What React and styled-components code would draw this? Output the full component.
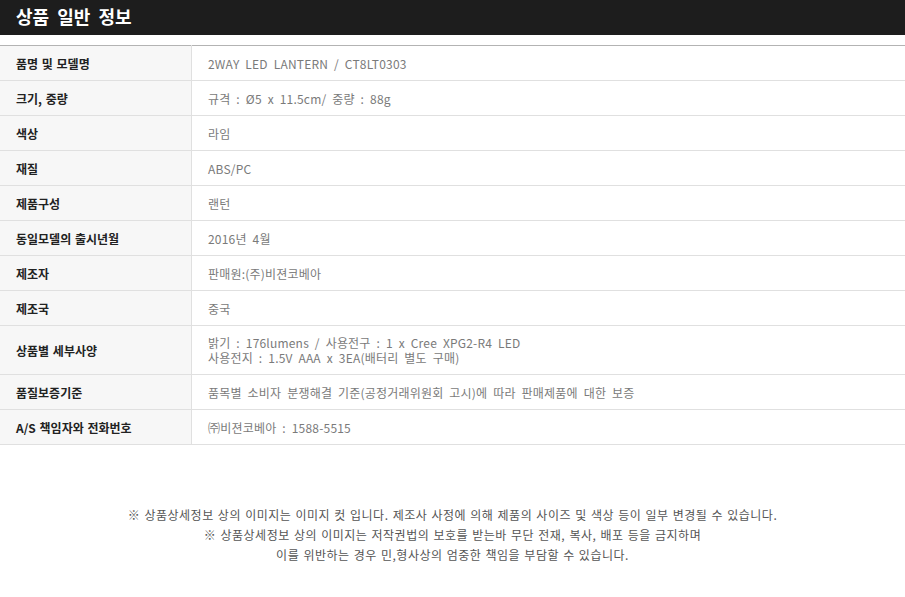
import React from "react";
import styled, { createGlobalStyle } from "styled-components";

const GlobalStyle = createGlobalStyle`
  body {
    margin: 0;
    background: #fff;
    font-family: "Noto Sans CJK KR", "Noto Sans", sans-serif;
  }
`;

const rows = [
  ["품명 및 모델명", ["2WAY LED LANTERN / CT8LT0303"]],
  ["크기, 중량", ["규격 : Ø5 x 11.5cm/ 중량 : 88g"]],
  ["색상", ["라임"]],
  ["재질", ["ABS/PC"]],
  ["제품구성", ["랜턴"]],
  ["동일모델의 출시년월", ["2016년 4월"]],
  ["제조자", ["판매원:(주)비젼코베아"]],
  ["제조국", ["중국"]],
  [
    "상품별 세부사양",
    [
      "밝기 : 176lumens / 사용전구 : 1 x Cree XPG2-R4 LED",
      "사용전지 : 1.5V AAA x 3EA(배터리 별도 구매)",
    ],
  ],
  ["품질보증기준", ["품목별 소비자 분쟁해결 기준(공정거래위원회 고시)에 따라 판매제품에 대한 보증"]],
  ["A/S 책임자와 전화번호", ["㈜비젼코베아 : 1588-5515"]],
];

const notes = [
  "※ 상품상세정보 상의 이미지는 이미지 컷 입니다. 제조사 사정에 의해 제품의 사이즈 및 색상 등이 일부 변경될 수 있습니다.",
  "※ 상품상세정보 상의 이미지는 저작권법의 보호를 받는바 무단 전재, 복사, 배포 등을 금지하며",
  "이를 위반하는 경우 민,형사상의 엄중한 책임을 부담할 수 있습니다.",
];

const Page = styled.div`
  width: 905px;
`;

const TitleBar = styled.h2`
  margin: 0;
  height: 35px;
  background: #1d1d1d;
  color: #fff;
  font-size: 18px;
  font-weight: 700;
  line-height: 33px;
  padding-left: 16px;
  word-spacing: 4px;
`;

const InfoTable = styled.table`
  width: 100%;
  margin-top: 10px;
  border-collapse: collapse;
  border-top: 1px solid #b3b3b3;
  font-size: 12px;
`;

const Row = styled.tr`
  border-bottom: 1px solid #e0e0e0;
`;

const Label = styled.th`
  width: 175px;
  height: ${(p) => (p.$tall ? 48 : 34)}px;
  padding: 0 0 0 16px;
  background: #f7f7f7;
  border-right: 1px solid #e0e0e0;
  text-align: left;
  font-weight: 700;
  color: #222;
  word-spacing: 1px;
`;

const Value = styled.td`
  padding: 0 0 0 16px;
  color: #7a7a7a;
  line-height: 15px;
  letter-spacing: 0.2px;
  word-spacing: 3px;
`;

const Notes = styled.div`
  margin-top: 60px;
  text-align: center;
  font-size: 12px;
  line-height: 20px;
  letter-spacing: 0.5px;
  word-spacing: 1px;
  color: #555;
`;

export default function App() {
  return (
    <Page>
      <GlobalStyle />
      <TitleBar>상품 일반 정보</TitleBar>
      <InfoTable>
        <tbody>
          {rows.map(([label, lines]) => (
            <Row key={label}>
              <Label $tall={lines.length > 1}>{label}</Label>
              <Value>
                {lines.map((l) => (
                  <div key={l}>{l}</div>
                ))}
              </Value>
            </Row>
          ))}
        </tbody>
      </InfoTable>
      <Notes>
        {notes.map((n) => (
          <div key={n}>{n}</div>
        ))}
      </Notes>
    </Page>
  );
}
